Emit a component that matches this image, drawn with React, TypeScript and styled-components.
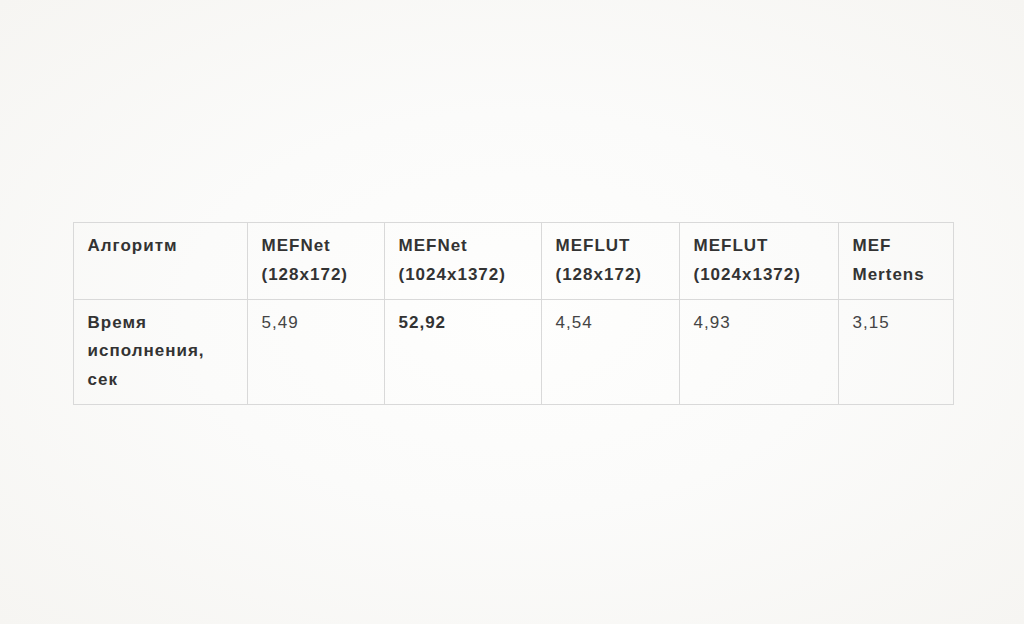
import React from 'react'
import styled, { createGlobalStyle } from 'styled-components'

const GlobalStyle = createGlobalStyle`
  html, body {
    margin: 0;
    padding: 0;
  }
  body {
    font-family: 'Liberation Sans', Arial, sans-serif;
    background: #f7f6f3;
  }
`

const Page = styled.div`
  width: 100vw;
  height: 100vh;
  display: flex;
  align-items: center;
  justify-content: center;
  background: radial-gradient(ellipse at 50% 50%, #fefefd 0%, #fbfbfa 45%, #f6f5f2 100%);
`

const Table = styled.table`
  width: 880px;
  table-layout: fixed;
  border-collapse: collapse;
  border: 1px solid #d9d9d9;
  font-size: 17px;
  letter-spacing: 1px;
  line-height: 28.8px;
  color: #333;
  margin-top: 3px;
  margin-left: 2px;
`

const Col = styled.col<{ w: number }>`
  width: ${p => p.w}px;
`

const HeadCell = styled.th`
  border: 1px solid #d9d9d9;
  padding: 9px 15px 9px 14px;
  text-align: left;
  vertical-align: top;
  font-weight: bold;
  color: #333;
`

const Cell = styled.td<{ strong?: boolean }>`
  border: 1px solid #d9d9d9;
  padding: 9px 15px 9px 14px;
  text-align: left;
  vertical-align: top;
  font-weight: ${p => (p.strong ? 'bold' : 'normal')};
  color: ${p => (p.strong ? '#333' : '#444')};
`

const widths = [174, 137, 157, 138, 159, 115]

const headers = [
  ['Алгоритм'],
  ['MEFNet', '(128x172)'],
  ['MEFNet', '(1024x1372)'],
  ['MEFLUT', '(128x172)'],
  ['MEFLUT', '(1024x1372)'],
  ['MEF', 'Mertens'],
]

const values = [
  { v: '5,49' },
  { v: '52,92', strong: true },
  { v: '4,54' },
  { v: '4,93' },
  { v: '3,15' },
]

export default function App() {
  return (
    <>
      <GlobalStyle />
      <Page>
        <Table>
          <colgroup>
            {widths.map((w, i) => <Col key={i} w={w} />)}
          </colgroup>
          <thead>
            <tr>
              {headers.map((lines, i) => (
                <HeadCell key={i}>
                  {lines.map((l, j) => <div key={j}>{l}</div>)}
                </HeadCell>
              ))}
            </tr>
          </thead>
          <tbody>
            <tr>
              <Cell strong>
                <div>Время</div>
                <div>исполнения,</div>
                <div>сек</div>
              </Cell>
              {values.map((c, i) => (
                <Cell key={i} strong={c.strong}>{c.v}</Cell>
              ))}
            </tr>
          </tbody>
        </Table>
      </Page>
    </>
  )
}
